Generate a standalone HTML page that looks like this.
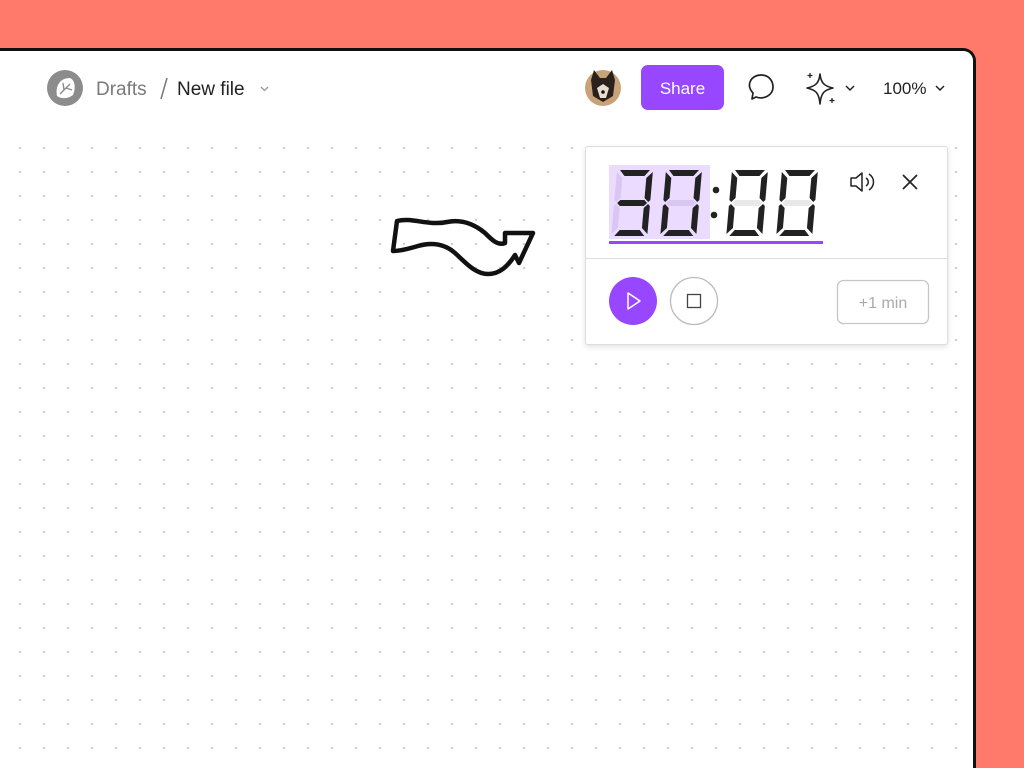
<!DOCTYPE html>
<html style="overflow:hidden;height:768px"><head><meta charset="utf-8"><style>
*{margin:0;padding:0;box-sizing:border-box}
body{width:1024px;height:768px;overflow:hidden;background:#FF7A6B;font-family:"Liberation Sans",sans-serif;position:relative}
.win{position:absolute;left:-10px;top:48px;width:986px;height:720px;background:#fff;border:3px solid #111;border-bottom:none;border-radius:0 13px 0 0;
background-image:radial-gradient(circle,#cdcdcd 1px,transparent 1.4px);background-size:24px 24px;background-position:15px 85px;overflow:hidden}
.hdr{position:absolute;left:0;top:0;width:100%;height:80px;background:#fff}
.panel{position:absolute;left:585px;top:146px;width:363px;height:199px;background:#fff;border:1px solid #ddd;border-radius:3px;box-shadow:0 2px 6px rgba(0,0,0,.12)}
</style></head><body>
<div class="win"><div class="hdr"></div></div>
<svg width="1024" height="768" style="position:absolute;left:0;top:0">
<defs>
<path id="sa" d="M6,0 H36 L31,6 H11 Z"/>
<path id="sd" d="M11,60 H31 L36,66 H6 Z"/>
<path id="sg" d="M9,30 H33 L36,33 L33,36 H9 L6,33 Z"/>
<path id="sf" d="M3,2 L9,8 V28 L5,32 L3,30 Z"/>
<path id="sb" d="M39,2 V30 L37,32 L33,28 V8 Z"/>
<path id="se" d="M3,36 L5,34 L9,38 V58 L3,64 Z"/>
<path id="sc" d="M39,36 V64 L33,58 V38 L37,34 Z"/>
</defs>
<circle cx="65" cy="88" r="18" fill="#8c8c8c"/>
<path d="M57,96 C55,86 60,78 70,78 C75,80 76,88 73,95 C68,99 61,99 57,96 Z" fill="#fff"/>
<path d="M60,94 L70,84 M64,90 L63,83 M66,88 L72,90" stroke="#8c8c8c" stroke-width="1.4" fill="none"/>
<text x="96" y="95" font-size="19" fill="#7a7a7a" font-family="Liberation Sans">Drafts</text>
<path d="M167,78 L161,99" stroke="#777" stroke-width="1.5"/>
<text x="177" y="95" font-size="19" fill="#222" font-family="Liberation Sans">New file</text>
<path d="M261,87 L264.5,90.5 L268,87" stroke="#999" stroke-width="1.3" fill="none"/>
<circle cx="603" cy="88" r="18" fill="#c9a27a"/>
<path d="M591,80 L594,70 L600,78 L606,78 L612,70 L615,80 L613,96 L603,102 L593,96 Z" fill="#2a211c"/>
<path d="M597,88 L603,84 L609,88 L606,98 L600,98 Z" fill="#e9ddd0"/>
<circle cx="603" cy="92" r="1.8" fill="#111"/>
<rect x="641" y="65" width="83" height="45" rx="7" fill="#9747FF"/>
<text x="682.5" y="94" text-anchor="middle" font-size="17" fill="#fff" font-family="Liberation Sans">Share</text>
<path d="M752,99 L753,93 C745,84 752,75 761,75 C769,75 773,81 773,87 C773,95 764,100 756,97 Z" stroke="#222" stroke-width="1.7" fill="none" stroke-linejoin="round"/>
<path d="M820,74 C821,83 824,86 833,88 C824,90 821,93 820,104 C819,93 816,90 807,88 C816,86 819,83 820,74 Z" stroke="#222" stroke-width="1.6" fill="none" stroke-linejoin="round"/>
<path d="M810,73 v5 M807.5,75.5 h5 M832,98 v5 M829.5,100.5 h5" stroke="#222" stroke-width="1.3"/>
<path d="M846,86 L850,90 L854,86" stroke="#222" stroke-width="1.5" fill="none"/>
<text x="883" y="94" font-size="17" fill="#222" font-family="Liberation Sans">100%</text>
<path d="M936,86 L940,90 L944,86" stroke="#222" stroke-width="1.5" fill="none"/>
<path d="M397,221 C412,217 428,226 447,222 C462,219 474,224 485,233 C492,240 498,246 505,243 L505,233 L533,233 L519,263 L515,255 C508,266 500,274 488,274 C475,274 465,262 455,253 C445,244 432,242 418,246 C408,249 400,251 393,251 Z" stroke="#111" stroke-width="4.5" fill="none" stroke-linejoin="round"/>
</svg>
<div class="panel"></div>
<svg width="1024" height="768" style="position:absolute;left:0;top:0">
<rect x="609" y="165" width="101" height="74" fill="#EADBFF"/>
<rect x="609" y="241" width="214" height="3" fill="#9747FF"/>
<line x1="586" y1="258.5" x2="947" y2="258.5" stroke="#ddd" stroke-width="1"/>
<g transform="translate(614,170) skewX(-5)">
<use href="#sf" fill="#d9c6f3"/><use href="#se" fill="#d9c6f3"/>
<use href="#sa" fill="#222"/><use href="#sb" fill="#222"/><use href="#sc" fill="#222"/><use href="#sd" fill="#222"/><use href="#sg" fill="#222"/></g>
<g transform="translate(663,170) skewX(-5)">
<use href="#sg" fill="#d9c6f3"/>
<use href="#sa" fill="#222"/><use href="#sb" fill="#222"/><use href="#sc" fill="#222"/><use href="#sd" fill="#222"/><use href="#se" fill="#222"/><use href="#sf" fill="#222"/></g>
<circle cx="716" cy="190" r="3.3" fill="#222"/><circle cx="714" cy="215" r="3.3" fill="#222"/>
<g transform="translate(729,170) skewX(-5)">
<use href="#sg" fill="#e8e8e8"/>
<use href="#sa" fill="#222"/><use href="#sb" fill="#222"/><use href="#sc" fill="#222"/><use href="#sd" fill="#222"/><use href="#se" fill="#222"/><use href="#sf" fill="#222"/></g>
<g transform="translate(779,170) skewX(-5)">
<use href="#sg" fill="#e8e8e8"/>
<use href="#sa" fill="#222"/><use href="#sb" fill="#222"/><use href="#sc" fill="#222"/><use href="#sd" fill="#222"/><use href="#se" fill="#222"/><use href="#sf" fill="#222"/></g>
<path d="M851,178 H856 L862,173 V191 L856,186 H851 Z" stroke="#222" stroke-width="1.5" fill="none" stroke-linejoin="round"/>
<path d="M866,178 C869,180 869,184 866,186 M869,174 C875,178 875,186 869,190" stroke="#222" stroke-width="1.5" fill="none"/>
<path d="M903,175 L917,189 M917,175 L903,189" stroke="#222" stroke-width="1.7"/>
<circle cx="633" cy="301" r="24" fill="#9747FF"/>
<path d="M628,293 L640,301 L628,309 Z" stroke="#fff" stroke-width="1.5" fill="none" stroke-linejoin="round"/>
<circle cx="694" cy="301" r="23.5" fill="#fff" stroke="#bbb" stroke-width="1.3"/>
<rect x="687.5" y="294.5" width="13" height="13" stroke="#444" stroke-width="1.3" fill="none"/>
<rect x="837.5" y="280.5" width="91" height="43" rx="6" fill="#fff" stroke="#c6c6c6" stroke-width="1.3"/>
<text x="883" y="308" text-anchor="middle" font-size="16" fill="#aaa" font-family="Liberation Sans">+1 min</text>
</svg>
</body></html>
